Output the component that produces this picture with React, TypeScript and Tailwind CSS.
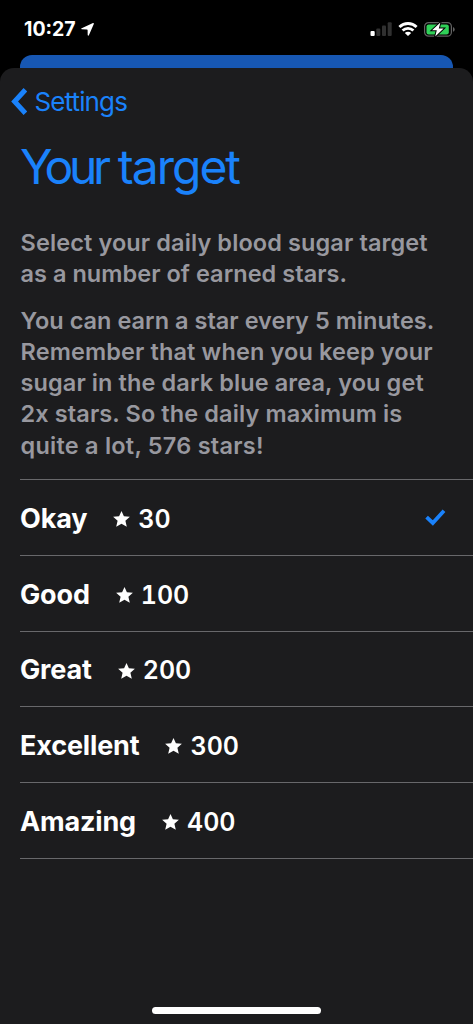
const intro = [
    { text: "Select your daily blood sugar target", tracking: "tracking-[0.11px]" },
    { text: "as a number of earned stars.", tracking: "tracking-[0.04px]" },
];

const details = [
    { text: "You can earn a star every 5 minutes.", tracking: "tracking-[0.02px]" },
    { text: "Remember that when you keep your", tracking: "tracking-[0.12px]" },
    { text: "sugar in the dark blue area, you get", tracking: "tracking-[0.1px]" },
    { text: "2x stars. So the daily maximum is", tracking: "tracking-[0.11px]" },
    { text: "quite a lot, 576 stars!", tracking: "tracking-[0.24px]" },
];

const targets = [
    { name: "Okay", stars: 30, selected: true },
    { name: "Good", stars: 100, selected: false },
    { name: "Great", stars: 200, selected: false },
    { name: "Excellent", stars: 300, selected: false },
    { name: "Amazing", stars: 400, selected: false },
];

const Star = () => (
    <svg className="w-[17px] h-4 shrink-0" viewBox="0 0 17 16" fill="currentColor">
        <path d="M8.5 0 L10.9 5.2 L16.9 5.8 L12.4 9.8 L13.8 15.8 L8.5 12.8 L3.2 15.8 L4.6 9.8 L0.1 5.8 L6.1 5.2Z" />
    </svg>
);

const StatusBar = () => (
    <div className="h-[55px] flex items-start justify-between pl-6 pr-[18px] pt-[19px] text-white">
        <div className="flex items-center gap-[5px] h-5">
            <span className="text-[19.5px] leading-5 font-bold">10:27</span>
            <svg className="w-[13px] h-[13px]" viewBox="0 0 13 13" fill="currentColor">
                <path d="M12 0.1 Q13.1 -0.2 12.8 0.9 L7.9 12.2 Q7.1 13.2 6.7 12.1 L6.6 7 Q6.6 6.4 6 6.4 L0.8 6.3 Q-0.4 6 0.7 5.2Z" />
            </svg>
        </div>
        <div className="flex items-center h-5">
            <svg className="w-[22px] h-[14px]" viewBox="0 0 22 14">
                <rect x="0.5" y="9" width="4.2" height="5" rx="1" fill="#fff" />
                <rect x="6.3" y="6.5" width="4" height="7.5" rx="1" fill="#303030" />
                <rect x="12" y="3.5" width="4" height="10.5" rx="1" fill="#303030" />
                <rect x="17.7" y="0.3" width="4" height="13.7" rx="1" fill="#303030" />
            </svg>
            <svg className="w-5 h-[14px] ml-1.5" viewBox="0 0 20 14" fill="none" stroke="#fff" strokeWidth="2.8">
                <path d="M1.4 5 A12.3 12.3 0 0 1 18.6 5" />
                <path d="M4.6 8.6 A7.7 7.7 0 0 1 15.4 8.6" />
                <path d="M10 14 L6.8 11 A4.5 4.5 0 0 1 13.2 11Z" fill="#fff" stroke="none" />
            </svg>
            <svg className="w-[31px] h-[15px] ml-1.5" viewBox="0 0 31 15">
                <rect x="0.6" y="0.6" width="26.8" height="13.6" rx="4" fill="none" stroke="#626262" strokeWidth="1.2" />
                <rect x="2.5" y="2.4" width="22.3" height="10" rx="2.2" fill="#30d158" />
                <path d="M29 5 Q30.7 5.7 30.7 7.4 Q30.7 9.2 29 9.8Z" fill="#626262" />
                <path d="M16.4 0.5 L8.1 8.3 H12.8 L11.2 14.5 L19.6 6.5 H14.8Z" fill="#fff" stroke="#000" strokeWidth="2" paintOrder="stroke" />
            </svg>
        </div>
    </div>
);

const App = () => {
    return (
        <div className="w-full h-screen flex flex-col overflow-hidden bg-black font-['Inter',sans-serif]">
            <StatusBar />
            <div className="mx-5 h-[13px] shrink-0 rounded-t-[12px] bg-[#1757b3]" />
            <div className="flex-1 flex flex-col rounded-t-[14px] bg-[#1c1c1e]">
                <button className="flex items-center self-start h-[34px] mt-4 pl-[11px] text-[#1a82fb]">
                    <svg className="w-4 h-[27px]" viewBox="0 0 16 27" fill="none" stroke="currentColor" strokeWidth="5">
                        <path d="M14.4 1.8 L3.6 13.5 L14.4 25.2" />
                    </svg>
                    <span className="mt-px ml-[7.5px] text-[26px] leading-8 tracking-[-0.034em]">Settings</span>
                </button>
                <h1 className="flex gap-[11px] h-[70px] pl-5 text-[48px] leading-[98px] text-[#1a82fb] whitespace-nowrap">
                    <span className="tracking-[-0.09em]">Your</span>
                    <span className="tracking-[-0.042em]">target</span>
                </h1>
                <div className="pl-[20.5px] mt-[38.5px] text-[23.5px] leading-[31.3px] font-semibold text-[#98989f] whitespace-nowrap">
                    <p>
                        {intro.map((line) => (
                            <span key={line.text} className={`block ${line.tracking}`}>{line.text}</span>
                        ))}
                    </p>
                    <p className="mt-[15.5px]">
                        {details.map((line) => (
                            <span key={line.text} className={`block ${line.tracking}`}>{line.text}</span>
                        ))}
                    </p>
                </div>
                <ul className="ml-5 mt-[18.1px] border-t border-[#68686b] text-white">
                    {targets.map((target) => (
                        <li key={target.name} className="h-[75.75px] flex items-center border-b border-[#68686b] pt-[3px] pr-[27px]">
                            <span className="text-[27px] font-bold tracking-[-0.006em]">{target.name}</span>
                            <span className="flex items-center ml-[26px] gap-2 text-[25px] font-semibold tabular-nums">
                                <Star />
                                <span className="mt-px">{target.stars}</span>
                            </span>
                            {target.selected && (
                                <svg className="w-[21px] h-[17px] ml-auto mb-[3px]" viewBox="0 0 21 17" fill="none" stroke="#1a82fb" strokeWidth="3.8">
                                    <path d="M1.6 8.2 L7.8 14 L19 1.7" />
                                </svg>
                            )}
                        </li>
                    ))}
                </ul>
                <div className="mt-auto mb-2.5 self-center w-[169px] h-[7px] rounded-full bg-white" />
            </div>
        </div>
    );
};

export default App;
